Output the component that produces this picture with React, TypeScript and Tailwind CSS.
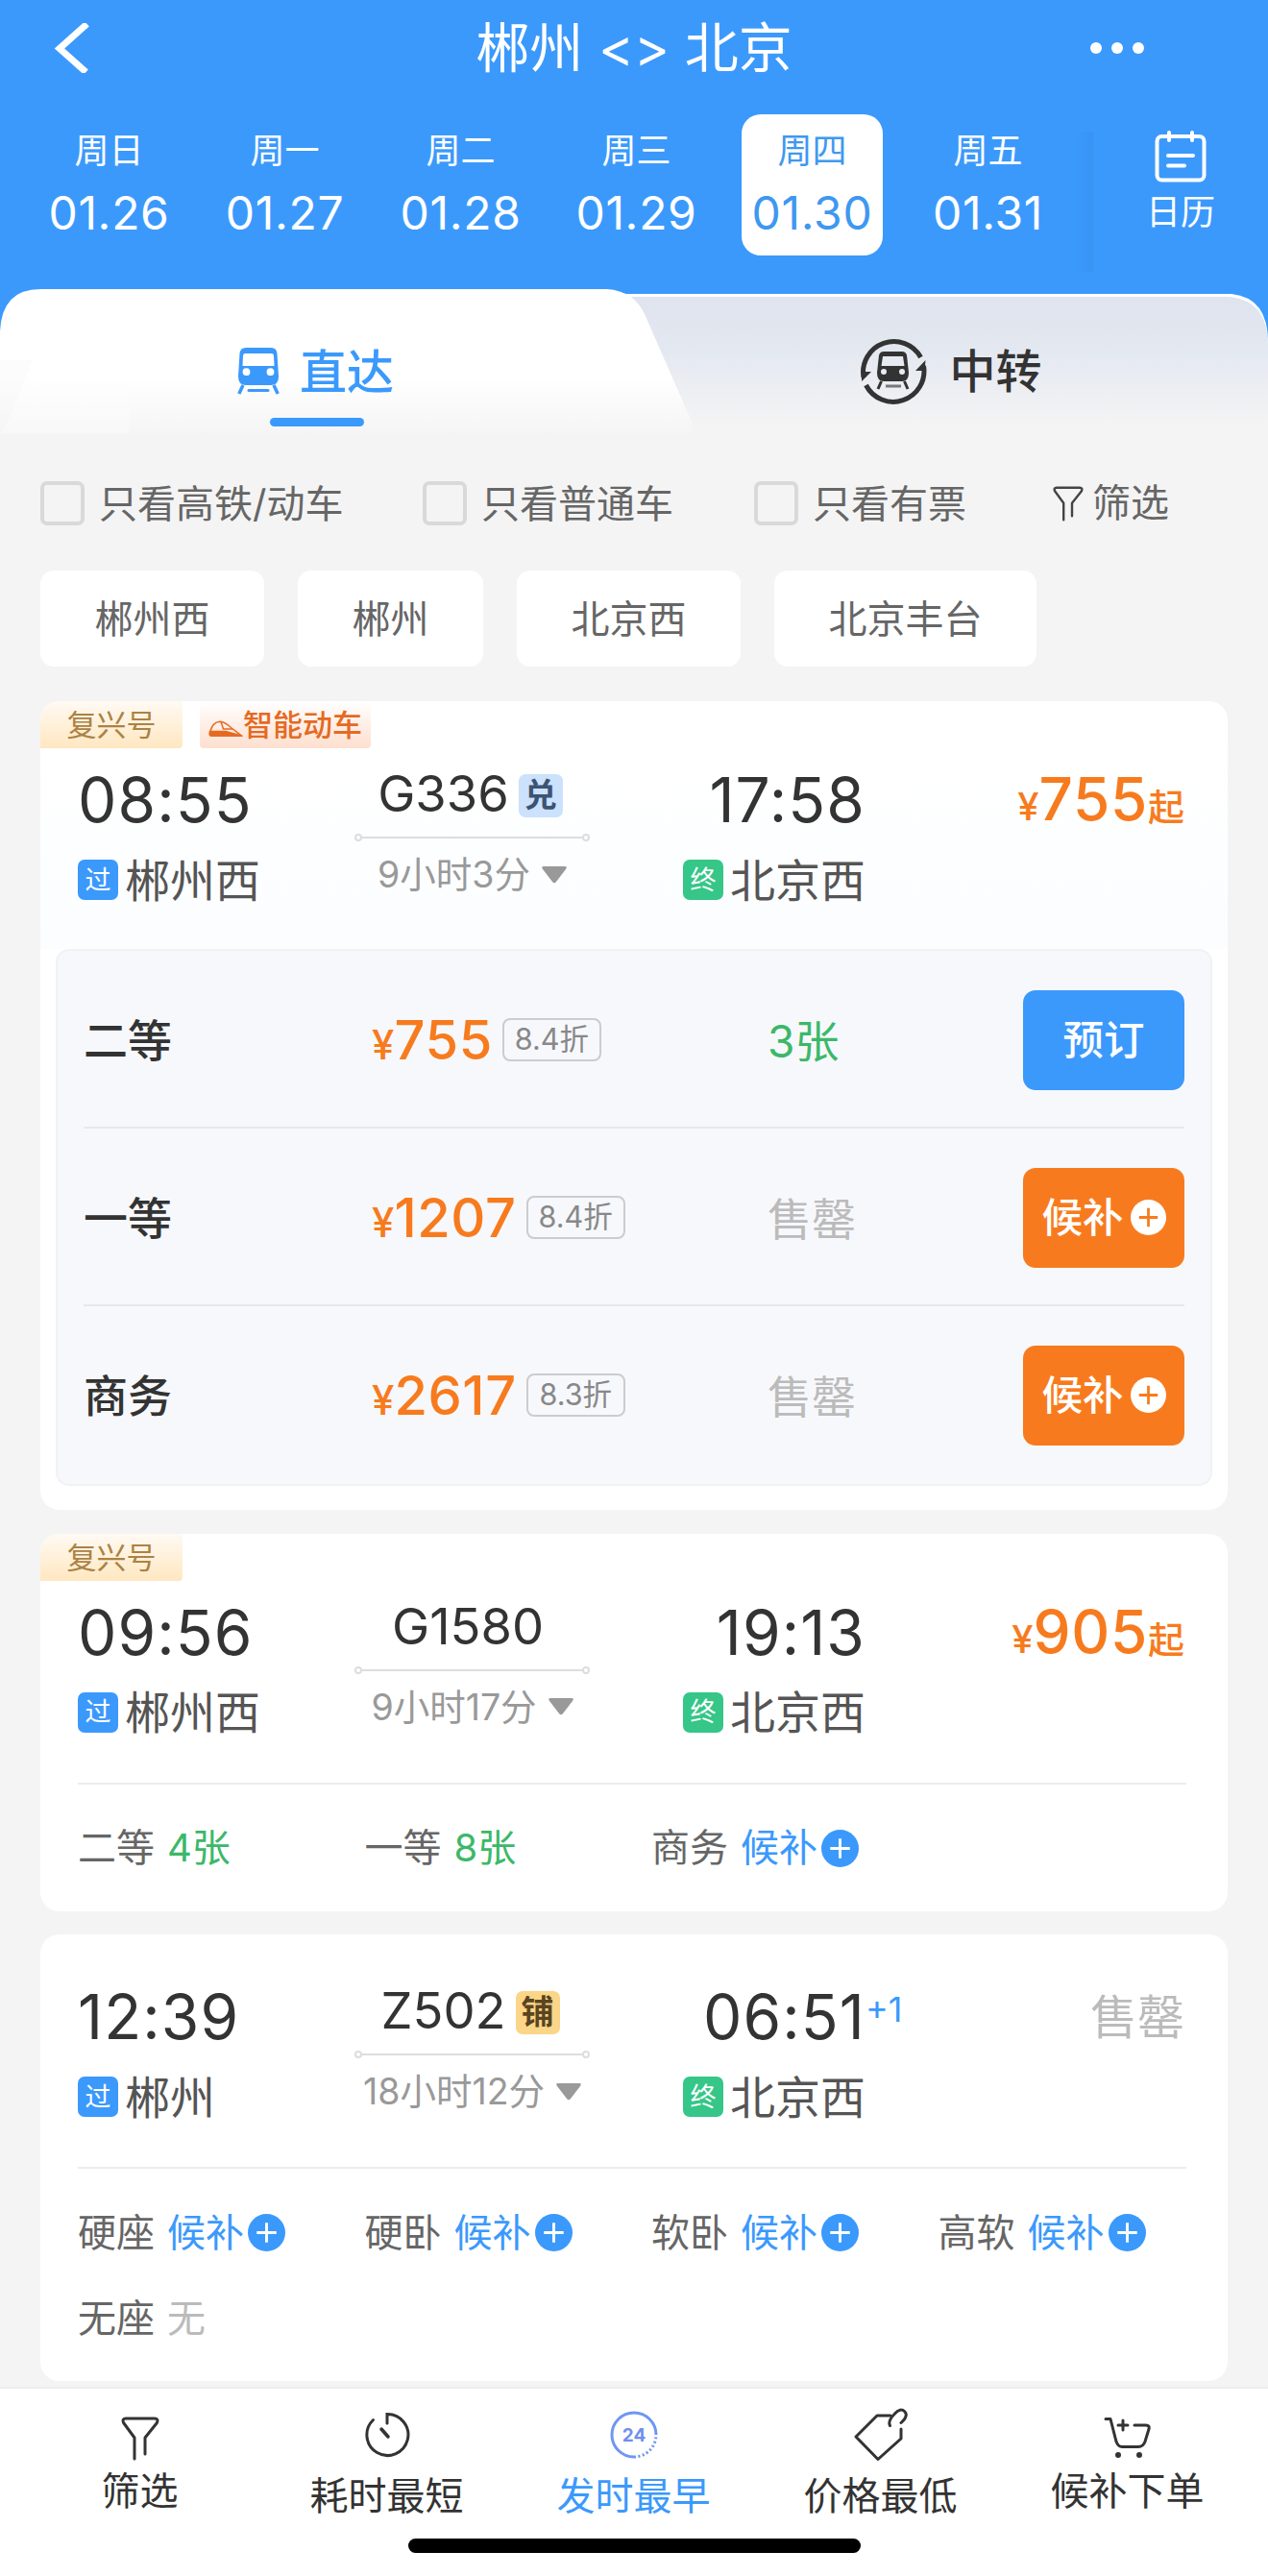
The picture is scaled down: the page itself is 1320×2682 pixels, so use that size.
/**
 * 车票查询结果页：日期选择、直达/中转切换、筛选条件、车次列表和底部排序栏。
 */

import type { ReactNode } from "react";
import clsx from "clsx";

interface Day {
  week: string;
  date: string;
  active?: boolean;
}

interface Seat {
  name: string;
  left?: string;
  waitlist?: boolean;
  none?: boolean;
}

interface Fare {
  name: string;
  price: string;
  discount: string;
  left?: string;
}

interface Train {
  tags: string[];
  depart: string;
  from: string;
  code: string;
  mark?: "兑" | "铺";
  duration: string;
  arrive: string;
  to: string;
  nextDay?: boolean;
  price?: string;
  fares?: Fare[];
  seats?: Seat[];
}

const DAYS: Day[] = [
  { week: "周日", date: "01.26" },
  { week: "周一", date: "01.27" },
  { week: "周二", date: "01.28" },
  { week: "周三", date: "01.29" },
  { week: "周四", date: "01.30", active: true },
  { week: "周五", date: "01.31" },
];

const STATIONS = ["郴州西", "郴州", "北京西", "北京丰台"];

const TRAINS: Train[] = [
  {
    tags: ["复兴号", "智能动车"],
    depart: "08:55",
    from: "郴州西",
    code: "G336",
    mark: "兑",
    duration: "9小时3分",
    arrive: "17:58",
    to: "北京西",
    price: "755",
    fares: [
      { name: "二等", price: "755", discount: "8.4折", left: "3张" },
      { name: "一等", price: "1207", discount: "8.4折" },
      { name: "商务", price: "2617", discount: "8.3折" },
    ],
  },
  {
    tags: ["复兴号"],
    depart: "09:56",
    from: "郴州西",
    code: "G1580",
    duration: "9小时17分",
    arrive: "19:13",
    to: "北京西",
    price: "905",
    seats: [
      { name: "二等", left: "4张" },
      { name: "一等", left: "8张" },
      { name: "商务", waitlist: true },
    ],
  },
  {
    tags: [],
    depart: "12:39",
    from: "郴州",
    code: "Z502",
    mark: "铺",
    duration: "18小时12分",
    arrive: "06:51",
    to: "北京西",
    nextDay: true,
    seats: [
      { name: "硬座", waitlist: true },
      { name: "硬卧", waitlist: true },
      { name: "软卧", waitlist: true },
      { name: "高软", waitlist: true },
      { name: "无座", none: true },
    ],
  },
];

/* ---------- 图标 ---------- */

function FunnelIcon({ className }: { className?: string }) {
  return (
    <svg viewBox="0 0 40 46" fill="none" stroke="currentColor" strokeWidth="3" strokeLinecap="round" strokeLinejoin="round" className={className}>
      <path d="M14 44V22L2.6 6.5Q0.8 2 5 2H35Q39.2 2 37.4 6.5L25 22V39" />
    </svg>
  );
}

function CalendarIcon() {
  return (
    <svg viewBox="0 0 54 54" fill="none" stroke="currentColor" strokeWidth="4" strokeLinecap="round" className="h-[54px] w-[54px]">
      <rect x="2.5" y="6" width="49" height="45.500" rx="5" />
      <path d="M15 2V10M39 2V10M14 26H40M14 36.500H31" />
    </svg>
  );
}

function TrainIcon() {
  return (
    <svg viewBox="0 0 44 50" className="h-[50px] w-[44px]">
      <path
        fill="currentColor"
        fillRule="evenodd"
        d="M9 0H35Q41 0 41.500 6L43 30Q43 39 35 39H9Q1 39 1 30L2.500 6Q3 0 9 0ZM8 6Q6 6 6 8.500L5.500 19H38.500L38 8.500Q38 6 36 6ZM9.500 21.300A3.900 3.900 0 1 0 9.500 29.100A3.900 3.900 0 1 0 9.500 21.300ZM34.500 21.300A3.900 3.900 0 1 0 34.500 29.100A3.900 3.900 0 1 0 34.500 21.300Z"
      />
      <path d="M6 39L1.800 48M38 39L42.200 48" stroke="currentColor" strokeWidth="3.500" />
      <path d="M12 44.500H32" stroke="currentColor" strokeWidth="3" strokeLinecap="round" />
    </svg>
  );
}

function TransferIcon() {
  return (
    <svg viewBox="0 0 70 70" className="h-[70px] w-[70px]">
      <g fill="none" stroke="currentColor" strokeWidth="5">
        <path d="M63.500 21A32 32 0 0 0 4 42" />
        <path d="M6.500 50A32 32 0 0 0 66.500 30" />
      </g>
      <path fill="currentColor" d="M2 46L12 36H2ZM68.500 24L58 35H67.500Z" />
      <g transform="translate(18 15)">
        <path
          fill="currentColor"
          fillRule="evenodd"
          d="M7 0H26Q30 0 31 4L33 22Q33 31 26 31H7Q0 31 0 22L2 4Q3 0 7 0ZM6 5L4.500 15H28.500L27 5ZM7 18A3 3 0 1 0 7 24A3 3 0 1 0 7 18ZM26 18A3 3 0 1 0 26 24A3 3 0 1 0 26 18Z"
        />
        <path d="M4.500 31L1 39M28.500 31L32 39" stroke="currentColor" strokeWidth="3" />
        <path d="M9 36H25" stroke="#777" strokeWidth="3" />
      </g>
    </svg>
  );
}

function BulletTrainIcon() {
  return (
    <svg viewBox="0 0 36 18" fill="none" stroke="currentColor" strokeWidth="1.500" className="h-[18px] w-[36px]">
      <path d="M1.500 13Q4 1.500 12 1.200Q17 1.200 24 8L34.500 16H3Q0.500 16 1.500 13Z" />
      <path d="M13 1.500L15.500 9H25" />
      <path d="M1.500 11.500H18L34.500 16H3Q1 16 1.500 11.500Z" fill="currentColor" />
    </svg>
  );
}

function PlusCircle({ className, cross }: { className?: string; cross: string }) {
  return (
    <svg viewBox="0 0 40 40" className={clsx("shrink-0", className)}>
      <circle cx="20" cy="20" r="20" fill="currentColor" />
      <path d="M20 9.500V30.500M9.500 20H30.500" stroke={cross} strokeWidth="3" />
    </svg>
  );
}

function TimerIcon() {
  return (
    <svg viewBox="0 0 48 48" fill="none" stroke="currentColor" strokeWidth="3" strokeLinecap="round" className="h-[48px] w-[48px]">
      <path d="M24 12V2.500A21.500 21.500 0 1 1 9.500 8.500" />
      <path d="M18 18L25 26" strokeWidth="3.500" />
    </svg>
  );
}

function Clock24Icon() {
  return (
    <svg viewBox="0 0 50 50" fill="none" stroke="#6f96f3" strokeWidth="3" className="h-[50px] w-[50px]">
      <path d="M48 25A23 23 0 1 0 25 48" />
      <path d="M25 48A23 23 0 0 0 48 25" strokeDasharray="2 2.500" />
      <text x="25" y="31.500" textAnchor="middle" fontSize="19" fontWeight="700" fill="#6f8ff0" stroke="none">
        24
      </text>
    </svg>
  );
}

function PriceTagIcon() {
  return (
    <svg viewBox="0 0 58 56" fill="none" stroke="currentColor" strokeWidth="3" strokeLinecap="round" strokeLinejoin="round" className="h-[56px] w-[58px]">
      <path d="M39 8H25L3 30L26 53.500L50 32V22" />
      <path d="M38.500 18.500C36 14 40 9.500 43.500 6C47 1.500 51 1 54 4C57 7.500 55 11 50 15.500" />
    </svg>
  );
}

function CartIcon() {
  return (
    <svg viewBox="0 0 50 46" fill="none" stroke="currentColor" strokeWidth="3" strokeLinecap="round" strokeLinejoin="round" className="h-[46px] w-[50px]">
      <path d="M2 2.500H7L13 26Q15 31.500 19 31.500H36Q41 31.500 43 26L47 13Q48 9 44 9H32" />
      <path d="M20 4V14M15 9H25" />
      <circle cx="15" cy="40" r="1.500" />
      <circle cx="37" cy="40" r="1.500" />
    </svg>
  );
}

/* ---------- 顶部 ---------- */

function Header() {
  return (
    <header className="h-[301px] bg-[#3b99fc] text-white">
      <div className="flex h-[100px] items-center">
        <div className="w-[220px] pl-[55px]">
          <svg viewBox="0 0 40 52" fill="none" stroke="currentColor" strokeWidth="7" className="h-[52px] w-[40px]">
            <path d="M35.500 1L7 26.500L34.500 51" />
          </svg>
        </div>
        <h1 className="flex-1 text-center text-[56px] leading-none whitespace-nowrap">郴州 &lt;&gt; 北京</h1>
        <div className="flex w-[220px] gap-[10px] pl-[35px]">
          <span className="size-3 rounded-full bg-white" />
          <span className="size-3 rounded-full bg-white" />
          <span className="size-3 rounded-full bg-white" />
        </div>
      </div>
      <div className="mt-[19px] flex h-[166px] pl-[22px]">
        {DAYS.map((d) => (
          <div key={d.date} className="flex w-[183px] justify-center">
            <div
              className={clsx(
                "flex h-[147px] w-[147px] flex-col items-center rounded-[20px] pt-[20px] leading-none",
                d.active && "bg-white text-[#3f98f0]",
              )}
            >
              <span className="text-[36px]">{d.week}</span>
              <span className="mt-[23px] text-[48px] tracking-[0.7px]">{d.date}</span>
            </div>
          </div>
        ))}
        <div className="flex w-[18px] flex-col">
          <div className="mt-[18px] h-[146px] w-full bg-gradient-to-r from-[#3b99fc] to-[#3893f3]" />
        </div>
        <div className="flex flex-1 flex-col items-center pt-[17px] leading-none">
          <CalendarIcon />
          <span className="mt-[13px] text-[36px]">日历</span>
        </div>
      </div>
    </header>
  );
}

function Tabs() {
  return (
    <div className="relative h-[166px]">
      <svg viewBox="0 0 1320 166" className="absolute inset-0 h-full w-full">
        <defs>
          <linearGradient id="tabOn" x1="0" y1="0" x2="0" y2="1">
            <stop offset="0.55" stopColor="#fff" />
            <stop offset="0.95" stopColor="#f4f4f4" />
          </linearGradient>
          <linearGradient id="tabOff" x1="0" y1="0" x2="0" y2="1">
            <stop offset="0.05" stopColor="#dfe4ee" />
            <stop offset="0.3" stopColor="#e2e7f0" />
            <stop offset="0.85" stopColor="#f4f4f4" />
          </linearGradient>
        </defs>
        <rect width="1320" height="60" fill="#3b99fc" />
        <path d="M560 5H1282Q1320 9 1320 55V166H560Z" fill="#fff" />
        <path d="M560 8H1280Q1320 12 1320 58V166H560Z" fill="url(#tabOff)" />
        <path d="M0 44Q2 0 42 0H632Q660 2 671 26L720 138V166H0Z" fill="url(#tabOn)" />
        <path d="M0 74H34L3 148H0Z" fill="#f5f6f9" opacity="0.35" />
        <path d="M30 92H134V152H0L3 148Z" fill="#fff" opacity="0.3" />
        <rect y="150" width="1320" height="16" fill="#f4f4f4" opacity="0.7" />
      </svg>
      <div className="relative flex h-full leading-none">
        <div className="flex w-[660px] flex-col items-center pt-[60px]">
          <div className="flex items-center gap-[21px] pr-[3px] text-[#3b99fc]">
            <TrainIcon />
            <span className="pt-[2px] text-[49px] font-medium">直达</span>
          </div>
          <div className="mt-[23px] h-[9px] w-[98px] rounded-full bg-[#3b99fc]" />
        </div>
        <div className="flex flex-1 items-start justify-center pt-[50px] text-[#333]">
          <div className="flex items-center gap-[23px]">
            <TransferIcon />
            <span className="pt-[2px] text-[48px] font-medium">中转</span>
          </div>
        </div>
      </div>
    </div>
  );
}

function CheckItem({ label, className }: { label: string; className: string }) {
  return (
    <div className={clsx("flex items-center gap-[15px]", className)}>
      <span className="size-[46px] rounded-[7px] border-4 border-[#d9d9d9]" />
      <span className="pt-[2px]">{label}</span>
    </div>
  );
}

function Filters() {
  return (
    <>
      <div className="mt-[34px] flex h-[46px] items-center pl-[42px] text-[40px] leading-none whitespace-nowrap text-[#666]">
        <CheckItem label="只看高铁/动车" className="w-[398px]" />
        <CheckItem label="只看普通车" className="w-[345px]" />
        <CheckItem label="只看有票" className="w-[311px]" />
        <FunnelIcon className="h-[37px] w-[32px] text-[#444]" />
        <span className="ml-[9px]">筛选</span>
      </div>
      <div className="mt-[47px] flex gap-[35px] pl-[42px] text-[40px] leading-none text-[#666]">
        {STATIONS.map((s) => (
          <span key={s} className="flex h-[100px] items-center rounded-[14px] bg-white px-[56.5px] pt-[2px]">
            {s}
          </span>
        ))}
      </div>
    </>
  );
}

/* ---------- 车次卡片 ---------- */

function Tag({ name }: { name: string }) {
  if (name === "智能动车") {
    return (
      <span className="flex h-[49px] w-[178px] items-center justify-center rounded-b-[4px] bg-gradient-to-b from-white to-[#fddfce] text-[31px] font-medium text-[#e56a22]">
        <span className="mt-[8px]">
          <BulletTrainIcon />
        </span>
        {name}
      </span>
    );
  }
  return (
    <span className="flex h-[49px] w-[148px] items-center justify-center rounded-br-[4px] bg-gradient-to-b from-[#fffaf4] to-[#ffe7c0] text-[31px] text-[#ab8243]">
      {name}
    </span>
  );
}

function Station({ kind, name }: { kind: "过" | "终"; name: string }) {
  return (
    <div className="mt-[30px] flex h-[42px] items-center gap-[7px] text-[47px] text-[#555] whitespace-nowrap">
      <span
        className={clsx(
          "flex size-[42px] shrink-0 items-center justify-center rounded-[7px] text-[27px] text-white",
          kind === "过" ? "bg-[#3b99fc]" : "bg-[#35c688]",
        )}
      >
        {kind}
      </span>
      {name}
    </div>
  );
}

function Mark({ mark }: { mark: "兑" | "铺" }) {
  return (
    <span
      className={clsx(
        "flex h-[45px] w-[46px] items-center justify-center rounded-[7px] text-[34px] font-bold",
        mark === "兑" ? "bg-[#cbe1fc] text-[#3c5473]" : "bg-[#fbd588] text-[#5a4520]",
      )}
    >
      {mark}
    </span>
  );
}

function Summary({ train }: { train: Train }) {
  return (
    <div className="flex pr-[45px] pl-[39px] leading-none text-[#333]">
      <div className="w-[288px] pt-[22px]">
        <div className="text-[64px] tracking-[1.1px]">{train.depart}</div>
        <Station kind="过" name={train.from} />
      </div>
      <div className="flex w-[245px] flex-col items-center pt-[26px]">
        <div className={clsx("flex h-[46px] items-center gap-[10px] text-[52.5px]", train.mark ? "mr-[4px]" : "mr-[9px]")}>
          <span className="-mt-[3px]">{train.code}</span>
          {train.mark && <Mark mark={train.mark} />}
        </div>
        <div className="mt-[17px] flex w-full items-center">
          <span className="size-[8px] rounded-full border-2 border-[#ddd]" />
          <span className="h-[2px] flex-1 bg-[#ddd]" />
          <span className="size-[8px] rounded-full border-2 border-[#ddd]" />
        </div>
        <div className="mt-[16px] flex items-center gap-[12px] text-[37.5px] whitespace-nowrap text-[#999]">
          {train.duration}
          <svg viewBox="0 0 26 18" className="h-[18px] w-[26px]">
            <path d="M2 0H24Q27 0 25 3L15 16Q13 18.500 11 16L1 3Q-1 0 2 0Z" fill="#999" />
          </svg>
        </div>
      </div>
      <div className="flex w-[287px] flex-col items-end pt-[22px]">
        <div className="relative text-[64px] tracking-[1.1px]">
          {train.arrive}
          {train.nextDay && (
            <span className="absolute top-[6px] left-full text-[36px] tracking-normal text-[#3b99fc]">+1</span>
          )}
        </div>
        <Station kind="终" name={train.to} />
      </div>
      <div className="flex-1 pt-[22px] text-right whitespace-nowrap">
        {train.price ? (
          <span className="font-medium text-[#f77b1e]">
            <span className="text-[40px]">¥</span>
            <span className="text-[62px] tracking-[0.7px]">{train.price}</span>
            <span className="text-[38px]">起</span>
          </span>
        ) : (
          <div className="pt-[8px] text-[49px] text-[#bbb]">售罄</div>
        )}
      </div>
    </div>
  );
}

function FareRow({ fare, last }: { fare: Fare; last: boolean }) {
  return (
    <div className={clsx("mx-[27px] flex h-[185px] items-center leading-none", last ? "pt-0" : "border-b-2 border-[#e6e8eb] pt-[2px]")}>
      <span className="w-[300px] pt-[1px] text-[46px] font-medium text-[#333]">{fare.name}</span>
      <div className="flex w-[412px] items-center gap-[10px]">
        <span className="font-medium text-[#f77b1e]">
          <span className="text-[42px]">¥</span>
          <span className="text-[56px] tracking-[0.6px]">{fare.price}</span>
        </span>
        <span className="flex h-[45px] w-[103px] items-center justify-center rounded-[8px] border-2 border-[#ccc] text-[30.5px] text-[#888]">
          {fare.discount}
        </span>
      </div>
      <span className={clsx("flex-1 pt-[2px] text-[46px]", fare.left ? "text-[#3cb868]" : "text-[#bbb]")}>{fare.left ?? "售罄"}</span>
      <button
        className={clsx(
          "flex h-[104px] w-[168px] items-center justify-center gap-[7px] rounded-[13px] text-[42.5px] font-medium text-white",
          fare.left ? "bg-[#3b99fc]" : "bg-[#f77b1e]",
        )}
      >
        <span className="pt-[2px]">{fare.left ? "预订" : "候补"}</span>
        {!fare.left && <PlusCircle className="size-[37px]" cross="#f77b1e" />}
      </button>
    </div>
  );
}

function SeatCell({ seat }: { seat: Seat }) {
  return (
    <div className="flex h-[89px] items-center gap-[13px]">
      <span className="text-[#666]">{seat.name}</span>
      {seat.left && <span className="text-[#3cb868]">{seat.left}</span>}
      {seat.none && <span className="text-[#bbb]">无</span>}
      {seat.waitlist && (
        <span className="flex items-center gap-[4px] text-[#3b99fc]">
          候补
          <PlusCircle className="size-[39px]" cross="#fff" />
        </span>
      )}
    </div>
  );
}

function TrainCard({ train }: { train: Train }) {
  return (
    <section className="overflow-hidden rounded-[20px] bg-white">
      {train.tags.length > 0 ? (
        <div className="flex h-[49px] gap-[18px] leading-none">
          {train.tags.map((t) => (
            <Tag key={t} name={t} />
          ))}
        </div>
      ) : (
        <div className="h-[32px]" />
      )}
      <div className={clsx(train.fares ? "h-[209px] bg-gradient-to-b from-white to-[#fbfdff]" : "h-[210px]")}>
        <Summary train={train} />
      </div>
      {train.fares && (
        <div className="mx-[16px] mb-[25px] h-[559px] rounded-[14px] border-2 border-[#f1f2f4] bg-[#f7f8fc]">
          {train.fares.map((f, i) => (
            <FareRow key={f.name} fare={f} last={i === train.fares!.length - 1} />
          ))}
        </div>
      )}
      {train.seats && (
        <div className="mr-[43px] ml-[39px] grid grid-cols-[repeat(4,298.500px)] border-t-2 border-[#ececec] pt-[22px] pb-[21px] text-[40px] leading-none whitespace-nowrap">
          {train.seats.map((s) => (
            <SeatCell key={s.name} seat={s} />
          ))}
        </div>
      )}
    </section>
  );
}

/* ---------- 底部排序栏 ---------- */

function NavItem({ icon, label, low, active }: { icon: ReactNode; label: string; low?: boolean; active?: boolean }) {
  return (
    <div className={clsx("flex w-[257px] flex-col items-center", active ? "text-[#3b99fc]" : "text-[#333]")}>
      <div className={clsx("flex items-center justify-center", low ? "mt-[19px] h-[58px]" : "mt-[22px] h-[60px]")}>{icon}</div>
      <span className={clsx("text-[40px] leading-none", low ? "mt-[15px]" : "mt-[5px]")}>{label}</span>
    </div>
  );
}

function BottomBar() {
  return (
    <nav className="flex h-[197px] flex-col items-center border-t-2 border-[#ededed] bg-white">
      <div className="flex h-[156px] w-full pl-[17px]">
        <NavItem icon={<FunnelIcon className="h-[46px] w-[40px]" />} label="筛选" />
        <NavItem icon={<TimerIcon />} label="耗时最短" low />
        <NavItem icon={<Clock24Icon />} label="发时最早" low active />
        <NavItem icon={<PriceTagIcon />} label="价格最低" low />
        <NavItem icon={<CartIcon />} label="候补下单" />
      </div>
      <div className="h-[15px] w-[471px] rounded-full bg-black" />
    </nav>
  );
}

export default function App() {
  return (
    <div className="flex h-[2682px] w-[1320px] flex-col overflow-hidden bg-[#f4f4f4] font-['Inter','Noto_Sans_CJK_SC',sans-serif]">
      <Header />
      <Tabs />
      <main className="min-h-0 flex-1">
        <Filters />
        <div className="mt-[36px] flex flex-col gap-[24.5px] px-[42px]">
          {TRAINS.map((t) => (
            <TrainCard key={t.code} train={t} />
          ))}
        </div>
      </main>
      <BottomBar />
    </div>
  );
}
